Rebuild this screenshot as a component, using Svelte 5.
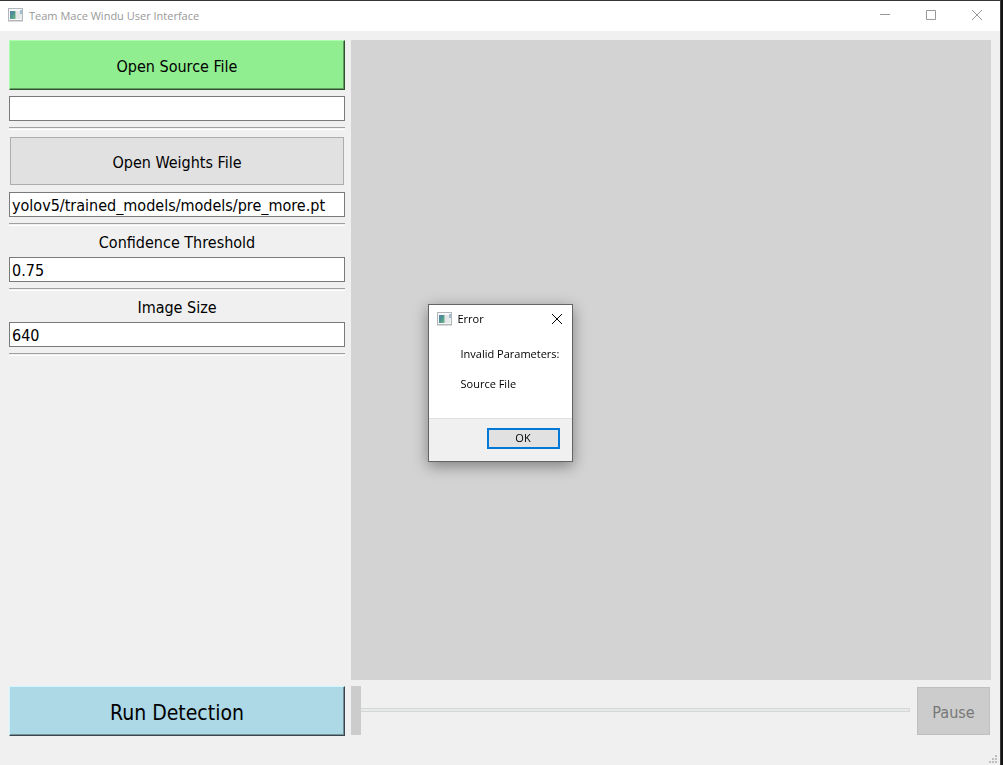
<script>
  let source = $state('');
  let weights = $state('yolov5/trained_models/models/pre_more.pt');
  let confidence = $state('0.75');
  let imageSize = $state('640');
  let position = $state(0);
  let showError = $state(true);
</script>

{#snippet appIcon()}
  <svg class="app-icon" width="16" height="14" viewBox="0 0 16 14" aria-hidden="true">
    <defs>
      <linearGradient id="pane" x1="0" y1="0" x2="1" y2="1">
        <stop offset="0" stop-color="#5580b0" />
        <stop offset="0.5" stop-color="#4f9490" />
        <stop offset="1" stop-color="#6cb886" />
      </linearGradient>
    </defs>
    <rect x="0.5" y="0.5" width="14" height="12" fill="#f8f8f8" stroke="#b2b6bc" />
    <path d="M0 13.5H15" stroke="#dcdcdc" />
    <rect x="2" y="3" width="5" height="8" fill="url(#pane)" />
    <rect x="7" y="3" width="1" height="8" fill="#a9cdb8" />
    <rect x="8" y="3" width="4" height="8" fill="#e6e6e9" />
    <rect x="12" y="2" width="2" height="4" fill="#9dc0d0" />
    <rect x="12" y="6" width="2" height="5" fill="#e6efe8" />
  </svg>
{/snippet}

<div class="window">
  <header class="titlebar">
    {@render appIcon()}
    <h1>Team Mace Windu User Interface</h1>
    <div class="caption">
      <button aria-label="Minimize">
        <svg width="10" height="10" viewBox="0 0 10 10"><path d="M0 4.5H10" /></svg>
      </button>
      <button aria-label="Maximize">
        <svg width="10" height="10" viewBox="0 0 10 10"><path d="M.5 .5H9.5V9.5H.5Z" /></svg>
      </button>
      <button aria-label="Close">
        <svg width="10" height="10" viewBox="0 0 10 10"><path d="M0 0L10 10M10 0L0 10" /></svg>
      </button>
    </div>
  </header>

  <main>
    <section class="controls">
      <button class="raised green">Open Source File</button>
      <input type="text" aria-label="Source file" bind:value={source} />
      <hr />
      <button class="flat">Open Weights File</button>
      <input type="text" aria-label="Weights file" bind:value={weights} />
      <hr />
      <label for="confidence">Confidence Threshold</label>
      <input id="confidence" type="text" bind:value={confidence} />
      <hr />
      <label for="image-size">Image Size</label>
      <input id="image-size" type="text" bind:value={imageSize} />
      <hr />
    </section>
    <section class="preview" aria-label="Preview"></section>
    <button class="raised blue">Run Detection</button>
    <div class="playback">
      <input type="range" min="0" max="100" aria-label="Position" disabled bind:value={position} />
      <button class="flat" disabled>Pause</button>
    </div>
  </main>

  <footer>
    <svg width="8" height="8" viewBox="0 0 8 8" aria-hidden="true">
      <path d="M6 0h2v2h-2zM3 3h2v2h-2zM6 3h2v2h-2zM0 6h2v2h-2zM3 6h2v2h-2zM6 6h2v2h-2z" fill="#bfbfbf" />
    </svg>
  </footer>
</div>

{#if showError}
  <div class="overlay">
    <div class="dialog" role="alertdialog" aria-labelledby="error-title" aria-describedby="error-text">
      <div class="dialog-title">
        {@render appIcon()}
        <h2 id="error-title">Error</h2>
        <button aria-label="Close" onclick={() => (showError = false)}>
          <svg width="10" height="10" viewBox="0 0 10 10"><path d="M0 0L10 10M10 0L0 10" /></svg>
        </button>
      </div>
      <div class="message" id="error-text">
        <p>Invalid Parameters:</p>
        <p>Source File</p>
      </div>
      <div class="actions">
        <button onclick={() => (showError = false)}>OK</button>
      </div>
    </div>
  </div>
{/if}

<style>
  :global(body) {
    margin: 0;
    background: #151515;
  }

  .window,
  .overlay {
    box-sizing: border-box;
    font-family: Tahoma, 'DejaVu Sans Condensed', 'Noto Sans', sans-serif;
    color: #000;
  }

  .window {
    display: flex;
    flex-direction: column;
    min-height: 100vh;
    margin-right: 2px;
    border-top: 1px solid #353335;
    border-right: 1px solid #3a3a3a;
    background: #f0f0f0;
  }

  button,
  input {
    box-sizing: border-box;
    margin: 0;
    font: inherit;
    color: inherit;
    border-radius: 0;
  }

  svg {
    display: block;
    flex: none;
  }

  .titlebar {
    display: flex;
    align-items: center;
    height: 30px;
    padding-left: 8px;
    background: #fff;
    color: #999;
  }

  .titlebar .app-icon {
    margin-bottom: 2px;
  }

  h1,
  h2 {
    flex: 1;
    margin: 0 0 0 5px;
    font: 400 11px/16px 'Segoe UI', 'Open Sans', sans-serif;
  }

  .caption {
    display: flex;
  }

  .caption button {
    display: grid;
    place-items: center;
    width: 46px;
    height: 30px;
    padding: 0 0 2px;
    border: 0;
    background: none;
  }

  .caption path,
  .dialog-title button path {
    fill: none;
    stroke: currentColor;
  }

  main {
    flex: 1;
    display: grid;
    grid-template-columns: minmax(0, 21fr) minmax(0, 40fr);
    grid-template-rows: 1fr 50px;
    gap: 6px;
    padding: 9px 9px 0;
    font-size: 16px;
    line-height: 22px;
  }

  .controls {
    display: flex;
    flex-direction: column;
    gap: 6px;
  }

  .controls input {
    width: 100%;
    height: 25px;
    padding: 2px 2px 0;
    border: 1px solid #7a7a7a;
    background: #fff;
  }

  .controls label {
    height: 19px;
    line-height: 22px;
    text-align: center;
  }

  hr {
    box-sizing: border-box;
    width: 100%;
    height: 3px;
    margin: 0;
    border: 0;
    border-top: 1px solid #a0a0a0;
    border-bottom: 1px solid #fff;
  }

  .raised {
    height: 50px;
    padding: 4px 0 0;
    border: 1px solid;
  }

  .green {
    background: #90ee90;
    border-color: #acffac #305030 #305030 #acffac;
    box-shadow: inset -1px -1px #609f60;
  }

  .blue {
    background: #add8e6;
    border-color: #cff5ff #3a484d #3a484d #cff5ff;
    box-shadow: inset -1px -1px #739099;
    font-size: 21px;
  }

  .flat {
    height: 48px;
    margin: 1px;
    padding: 4px 0 0;
    border: 1px solid #adadad;
    background: #e1e1e1;
  }

  .flat:disabled {
    border-color: #bfbfbf;
    background: #ccc;
    color: #787878;
  }

  .preview {
    background: #d3d3d3;
  }

  .playback {
    display: flex;
    align-items: flex-start;
    gap: 6px;
  }

  .playback .flat {
    width: 73px;
  }

  input[type='range'] {
    flex: 1;
    min-width: 0;
    height: 48px;
    appearance: none;
    background: none;
  }

  input[type='range']::-webkit-slider-runnable-track {
    height: 4px;
    background: #e7eaea;
    box-shadow: inset 0 0 0 1px #d6d6d6;
  }

  input[type='range']::-webkit-slider-thumb {
    appearance: none;
    width: 10px;
    height: 49px;
    margin-top: -22px;
    background: #ccc;
  }

  footer {
    display: flex;
    justify-content: flex-end;
    align-items: flex-end;
    height: 29px;
    box-sizing: border-box;
    padding: 0 3px 2px;
  }

  .overlay {
    position: fixed;
    inset: 0 3px 0 0;
    display: grid;
    place-items: center;
    font: 11px/16px 'Segoe UI', 'Open Sans', sans-serif;
  }

  .dialog {
    border: 1px solid #646464;
    background: #fff;
    box-shadow: 0 4px 14px rgba(0, 0, 0, 0.4);
  }

  .dialog-title {
    display: flex;
    align-items: center;
    height: 29px;
    padding-left: 8px;
  }

  .dialog-title button {
    padding: 10px;
    border: 0;
    background: none;
  }

  .message {
    padding: 12px 12px 26px 32px;
  }

  .message p {
    margin: 0;
  }

  .message p + p {
    margin-top: 14px;
  }

  .actions {
    display: flex;
    justify-content: flex-end;
    padding: 9px 12px 12px;
    border-top: 1px solid #dfdfdf;
    background: #f0f0f0;
  }

  .actions button {
    width: 73px;
    height: 21px;
    padding: 0;
    line-height: 16px;
    border: 2px solid #0078d7;
    background: #e1e1e1;
  }
</style>
